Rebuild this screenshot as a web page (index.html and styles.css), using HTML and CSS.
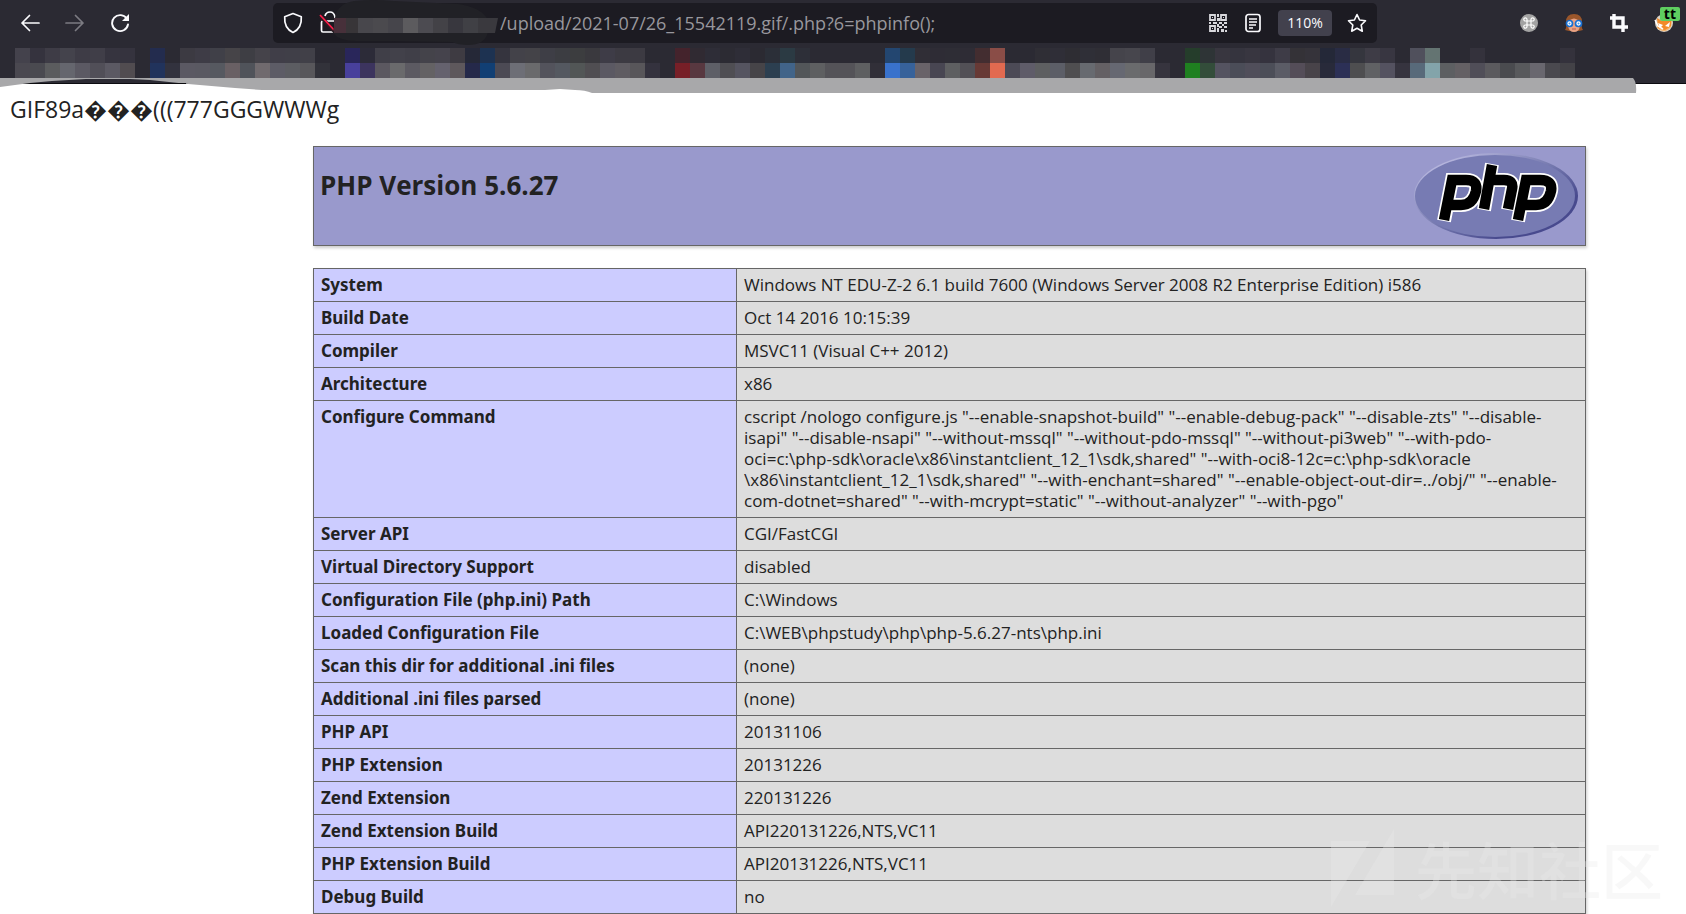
FILE: index.html
```html
<!DOCTYPE html>
<html lang="en">
<head>
<meta charset="utf-8">
<title>phpinfo()</title>
<link rel="stylesheet" href="styles.css">
</head>
<body>
<header class="chrome">
  <div class="toolbar">
    <nav class="nav">
      <button class="tool" aria-label="Back"><svg width="20" height="20" viewBox="0 0 20 20"><path d="M19 10H2M9.500 2.500L2 10l7.500 7.500" fill="none" stroke="#fbfbfe" stroke-width="1.700" stroke-linecap="round" stroke-linejoin="round"/></svg></button>
      <button class="tool" aria-label="Forward"><svg width="20" height="20" viewBox="0 0 20 20"><path d="M1 10h17M10.500 2.500L18 10l-7.500 7.500" fill="none" stroke="#7c7b82" stroke-width="1.700" stroke-linecap="round" stroke-linejoin="round"/></svg></button>
      <button class="tool" aria-label="Reload"><svg width="20" height="20" viewBox="0 0 20 20"><path d="M17 6A8 8 0 1 0 18 11.500" fill="none" stroke="#fbfbfe" stroke-width="1.900" stroke-linecap="round"/><path d="M19 1v7h-7z" fill="#fbfbfe"/></svg></button>
    </nav>
    <div class="urlbar">
      <svg class="shield" width="20" height="22" viewBox="0 0 20 22"><path d="M10 1.500L18.300 4.800C18.800 12 16.500 17.500 10 20.500C3.500 17.500 1.200 12 1.700 4.800Z" fill="none" stroke="#fbfbfe" stroke-width="1.700" stroke-linejoin="round"/></svg>
      <svg class="host" width="184" height="50" viewBox="0 0 184 50">
        <path d="M5 23h13v11H5q-1.500 0-1.500-1.500v-8Q3.500 23 5 23zM7 18q1-4 5-4t5 5v4" fill="none" stroke="#fbfbfe" stroke-width="1.700"/>
        <path d="M2 18l16 17" stroke="#2b1b22" stroke-width="4"/><path d="M2 17l16 17" stroke="#ff1f4b" stroke-width="1.700"/>
        <path d="M17 20C19 8 27 5 36 3Q55 1 76 3L140 6Q163 9 170 22V34Q167 47 150 47Q140 47 134 44L72 43H42Q22 44 15 35Z" fill="#212126"/>
        <g class="mosaic">
          <path d="M16 20h12v15H16z" fill="#47303a"/><path d="M28 20h12v15H28z" fill="#383538"/><path d="M40 20h15v15H40z" fill="#48474c"/><path d="M55 20h15v15H55z" fill="#4b4a4e"/><path d="M70 20h15v15H70z" fill="#46454b"/><path d="M85 20h15v15H85z" fill="#5c5b5e"/><path d="M100 20h15v15h-15z" fill="#4c4b51"/><path d="M115 20h15v15h-15z" fill="#434247"/><path d="M130 20h15v15h-15z" fill="#38373e"/><path d="M145 20h15v15h-15z" fill="#404045"/><path d="M160 20h20l-3 15h-17z" fill="#3a393e"/>
        </g>
      </svg>
      <input class="address" type="text" aria-label="Address" value="/upload/2021-07/26_15542119.gif/.php?6=phpinfo();">
      <div class="actions">
        <button class="action" aria-label="QR code"><svg width="18" height="18" viewBox="0 0 18 18"><path d="M1 1h5v5H1zM12 1h5v5h-5zM1 12h5v5H1z" fill="none" stroke="#d8d8dc" stroke-width="1.800"/><path d="M3 3h1v1H3zM14 3h1v1h-1zM3 14h1v1H3zM8 0h2v3H8zM8 4h3v3H8zM0 8h2v2H0zM4 8h4v2H4zM10 8h3v2h-3zM15 8h3v2h-3zM8 10h2v3H8zM13 10h2v2h-2zM10 12h3v2h-3zM15 12h3v2h-3zM8 14h2v4H8zM12 15h3v3h-3zM16 16h2v2h-2z" fill="#d8d8dc"/></svg></button>
        <button class="action" aria-label="Reader view"><svg width="18" height="20" viewBox="0 0 18 20"><rect x="2" y="1.500" width="14" height="17" rx="2.500" fill="none" stroke="#fbfbfe" stroke-width="1.700"/><path d="M5 6h8M5 9h8M5 12h7M5 15h4" stroke="#fbfbfe" stroke-width="1.500"/></svg></button>
        <button class="zoom">110%</button>
        <button class="action" aria-label="Bookmark this page"><svg width="20" height="20" viewBox="0 0 20 20"><path d="M10 1.500l2.600 5.500 5.900.8-4.300 4.200 1.100 6.200L10 15.300l-5.300 2.900 1.100-6.200L1.500 7.800 7.400 7z" fill="none" stroke="#fbfbfe" stroke-width="1.600" stroke-linejoin="round"/></svg></button>
      </div>
    </div>
    <div class="nav">
      <button class="tool" aria-label="Command extension"><svg width="20" height="20" viewBox="0 0 20 20"><circle cx="10" cy="10" r="9" fill="#a3a3a3"/><path d="M8 8h4v4H8zM8 8H6.500A1.600 1.600 0 1 1 8 6.500zM12 8V6.500A1.600 1.600 0 1 1 13.500 8zM12 12h1.500A1.600 1.600 0 1 1 12 13.500zM8 12v1.500A1.600 1.600 0 1 1 6.500 12z" fill="none" stroke="#fff" stroke-width="1.200"/></svg></button>
      <button class="tool" aria-label="Profile extension"><svg width="20" height="20" viewBox="0 0 20 20"><path d="M1 17Q3 14 2 9 2 1 10 1t8 8q-1 5 1 8l-4 1H5z" fill="#9a562b"/><path d="M5 7q5-3 10 0l1 6q-1 6-6 6t-6-6z" fill="#e9a283"/><path d="M4 7q4 0 6-3 2 3 6 3V3H4z" fill="#9a562b"/><circle cx="5.500" cy="10.500" r="3" fill="#fff" stroke="#176fd1" stroke-width="1.700"/><circle cx="14.500" cy="10.500" r="3" fill="#fff" stroke="#176fd1" stroke-width="1.700"/><circle cx="5.500" cy="10.500" r="1" fill="#4897e8"/><circle cx="14.500" cy="10.500" r="1" fill="#4897e8"/><path d="M8 16h4" stroke="#b85a4d"/></svg></button>
      <button class="tool" aria-label="Screenshot"><svg width="20" height="20" viewBox="0 0 20 20"><path d="M5 1v13h14M1 5h13v14" fill="none" stroke="#fbfbfe" stroke-width="3.400"/></svg></button>
      <button class="tool" aria-label="Proxy extension"><svg width="20" height="20" viewBox="0 0 20 20"><circle cx="10" cy="10" r="9" fill="#d9d2c7"/><path d="M3 15Q10 22 17 14L18 8 3 11z" fill="#f6b46e"/><path d="M3 5l5 3 6-1 3-3v9l-6 4-7-2z" fill="#f18a2a"/><path d="M4 10l5 2-3 3zM16 9l-5 4 4 1z" fill="#fff"/><path d="M1 7l3 6 5 3" fill="none" stroke="#fff" stroke-width="1.500"/></svg><span class="badge">tt</span></button>
    </div>
  </div>
  <svg class="bookmarks" id="bookmarks" height="45" width="100%" aria-hidden="true"></svg>
  <svg class="brush" height="16" width="1638" viewBox="0 0 1638 16" aria-hidden="true">
    <path d="M0 0H1633Q1637 4 1636 15H592Q585 12 575 12L560 11 545 12H262L235 10 188 6 150 2 130 1H86L52 3 30 5 0 9Z" fill="#a8a8aa"/>
    <path d="M30 5.500H186" stroke="#0c0c10"/>
  </svg>
</header>
<main class="page">
  <p class="raw">GIF89a<span class="unknown">���</span>(((777GGGWWWg</p>
  <div class="info">
    <div class="banner">
      <h1 class="title">PHP Version 5.6.27</h1>
      <svg class="logo" width="166" height="88" viewBox="0 0 166 88" role="img" aria-label="PHP logo">
        <defs><linearGradient id="rim" x1="0" y1="0" x2="1" y2="1"><stop offset="0.150" stop-color="#b4b4dc"/><stop offset="0.500" stop-color="#7377ad"/><stop offset="0.750" stop-color="#484a8e"/></linearGradient></defs>
        <ellipse cx="83" cy="44" rx="82" ry="43" fill="url(#rim)"/>
        <ellipse cx="82" cy="44" rx="80" ry="41" fill="#777bb3"/>
        <g fill="none">
          <path d="M31 69L39 28H53Q65 28 63 39Q60 53 48 53H37M71 58L79 12M76 28H91Q101 28 99 37L95 58M105 69L113 28H127Q140 28 138 39Q135 53 123 53H112" stroke="#fff" stroke-width="14"/>
          <path d="M31 68L39 28H53Q65 28 63 39Q60 53 48 53H37M71 57L79 13M76 28H91Q101 28 99 37L95 57M105 68L113 28H127Q140 28 138 39Q135 53 123 53H112" stroke="#000" stroke-width="10.500"/>
        </g>
      </svg>
    </div>
    <table class="facts">
      <tbody>
        <tr><th scope="row">System</th><td>Windows NT EDU-Z-2 6.1 build 7600 (Windows Server 2008 R2 Enterprise Edition) i586</td></tr>
        <tr><th scope="row">Build Date</th><td>Oct 14 2016 10:15:39</td></tr>
        <tr><th scope="row">Compiler</th><td>MSVC11 (Visual C++ 2012)</td></tr>
        <tr><th scope="row">Architecture</th><td>x86</td></tr>
        <tr><th scope="row">Configure Command</th><td>cscript /nologo configure.js "--enable-snapshot-build" "--enable-debug-pack" "--disable-zts" "--disable-<br>isapi" "--disable-nsapi" "--without-mssql" "--without-pdo-mssql" "--without-pi3web" "--with-pdo-<br>oci=c:\php-sdk\oracle\x86\instantclient_12_1\sdk,shared" "--with-oci8-12c=c:\php-sdk\oracle<br>\x86\instantclient_12_1\sdk,shared" "--with-enchant=shared" "--enable-object-out-dir=../obj/" "--enable-<br>com-dotnet=shared" "--with-mcrypt=static" "--without-analyzer" "--with-pgo"</td></tr>
        <tr><th scope="row">Server API</th><td>CGI/FastCGI</td></tr>
        <tr><th scope="row">Virtual Directory Support</th><td>disabled</td></tr>
        <tr><th scope="row">Configuration File (php.ini) Path</th><td>C:\Windows</td></tr>
        <tr><th scope="row">Loaded Configuration File</th><td>C:\WEB\phpstudy\php\php-5.6.27-nts\php.ini</td></tr>
        <tr><th scope="row">Scan this dir for additional .ini files</th><td>(none)</td></tr>
        <tr><th scope="row">Additional .ini files parsed</th><td>(none)</td></tr>
        <tr><th scope="row">PHP API</th><td>20131106</td></tr>
        <tr><th scope="row">PHP Extension</th><td>20131226</td></tr>
        <tr><th scope="row">Zend Extension</th><td>220131226</td></tr>
        <tr><th scope="row">Zend Extension Build</th><td>API220131226,NTS,VC11</td></tr>
        <tr><th scope="row">PHP Extension Build</th><td>API20131226,NTS,VC11</td></tr>
        <tr><th scope="row">Debug Build</th><td>no</td></tr>
        <tr><th scope="row"></th><td></td></tr>
      </tbody>
    </table>
  </div>
</main>
<div class="watermark" lang="zh">
  <svg width="64" height="80" viewBox="0 0 64 80" aria-hidden="true"><path d="M0 13H39L0 79ZM63 1V67H24Z" fill="#eaeaea"/></svg>
  <span>先知社区</span>
</div>
<script src="script.js"></script>
</body>
</html>
```
FILE: styles.css
```css
* { box-sizing: border-box; }
html { overflow: hidden; height: 100%; }
body {
  margin: 0;
  height: 100%;
  overflow: hidden;
  background: #fff;
  color: #222;
  font-family: "Open Sans", "Noto Sans", sans-serif;
}
button, input { font: inherit; color: inherit; border: 0; padding: 0; background: none; }
svg { display: block; flex: none; }

.chrome { position: relative; background: #2b2a33; border-bottom: 1px solid #0c0c10; height: 84px; }
.toolbar { display: flex; align-items: center; height: 46px; padding-left: 7px; }
.nav { display: flex; flex: none; }
.tool { position: relative; display: flex; align-items: center; justify-content: center; width: 45px; height: 40px; }
.badge {
  position: absolute; top: 4px; right: 6px;
  padding: 0 4px; border-radius: 2px;
  background: #5fce60; color: #000;
  font: bold 14px/14px "Open Sans", sans-serif;
}
.urlbar {
  flex: 1; min-width: 0; height: 40px; margin: 0 129px 0 131px;
  display: flex; align-items: center;
  border-radius: 5px; background: #1c1b22;
}
.shield { margin-left: 10px; }
.host { margin: -5px 0 -5px 15px; }
.address { flex: 1; min-width: 0; margin-left: -2px; height: 32px; color: #98979d; font-size: 18px; outline: none; }
.actions { display: flex; align-items: center; flex: none; padding-right: 10px; }
.action { display: flex; justify-content: center; width: 35px; }
.action:last-child { width: 20px; }
.zoom { width: 54px; height: 26px; margin: 0 15px 0 8px; border-radius: 4px; background: #42414d; color: #fbfbfe; font-size: 14px; line-height: 26px; }
.bookmarks { position: absolute; left: 0; top: 48px; }
.brush { position: absolute; left: 0; top: 78px; }

.page { padding: 7px 10px; }
.raw { margin: 0; font-size: 23px; line-height: 36px; }
.unknown { font-family: "Noto Sans", sans-serif; }
.info { margin: 19px 90px 0 303px; }
.banner {
  display: flex; align-items: flex-start; justify-content: space-between;
  height: 100px; padding: 5px 6px;
  border: 1px solid #666; background: #9999cc;
  box-shadow: 1px 2px 3px #ccc;
}
.title { margin: 15px 0 0; font-size: 26px; line-height: 36px; font-weight: bold; }
.facts {
  width: 100%; margin-top: 22px;
  border-collapse: collapse; table-layout: fixed;
  box-shadow: 1px 2px 3px #ccc;
  font-size: 17px; line-height: 21px;
}
.facts th, .facts td { height: 33px; padding: 5px 7px 6px; border: 1px solid #666; text-align: left; vertical-align: top; }
.facts th { width: 423px; background: #ccccff; font-family: "Noto Sans", sans-serif; font-weight: bold; }
.facts td { background: #ddd; white-space: nowrap; }

.watermark {
  position: fixed; right: 23px; bottom: 6px;
  display: flex; align-items: center; gap: 20px;
  opacity: 0.32; color: #eaeaea;
  font: 500 62px/80px "Noto Sans CJK SC", sans-serif;
}
```
FILE: script.js
```js
// Bookmark strip: two rows of 15px tiles, one hex colour per tile, "-" for an empty tile.
const upper = "44424c 35333e 3e3c46 44434c 3e3c46 403e48 36343f 35333e - 232c4e - 3c3a42 3e3c46 404048 464448 3e3e44 45434a 403e48 403f48 414048 - - 29265a 2c2b38 403f48 42414a 403f48 44434a 45434c 3e3b42 252837 1d3251 35343e 434249 444348 3e3e46 3c3d42 3c3d3f 3a393e 3e3c47 3c3a42 3c3a42 - - 44232c 302a32 2e2d37 2c2b33 2e2d37 2b2a32 2b2f38 2b3a43 2d2f38 - - - - - 234670 243a4c 302e36 2e2c35 2e2d35 2e2c35 432d30 8a4d47 - - 2f2e35 2f2e37 2e2d33 2f2f37 2f2e35 45444b 47464d 403f48 - - 253d2b 2e3436 38363f 35343e 383640 35333e 3e3c47 343237 35333a 242838 292c44 35363e 3e3c46 383641 - 50505c 647472 - - 34323c - - - - - 34323c".split(" ");
const lower = "4a4850 4a4a50 5b5c5e 65666e 5b5963 514f58 5b5963 514c50 - 21335c 32323e 5b5963 5a5962 565960 696064 50535a 706a6e 5d5c66 5c5d62 58575b 32323a - 48409c 3c345e 5b5860 6a6a6c 5c5a62 646264 65626e 5e585c 25294a 113f74 4c4a54 6d6e76 6a6a6c 53535c 545860 525656 504e52 5b5963 5f5c62 58565a 34323e - 771f27 583840 5e5f67 4f4e53 555460 464448 2c3f50 416489 525659 5e5f61 545358 545358 5e5f61 312f38 3972cc 37629a 696369 484652 5e5f61 525056 673935 e26a50 4c4a56 5f5c69 5e5f61 5c5e67 4f4e50 676a70 646064 666872 6a6b6d 68676a 36343e - 1f8020 334d3a 545360 4b4d58 504e5a 4c4e58 5b5c66 544d58 484349 282a3a 2c3056 4e4e50 606164 545260 36343f 586a7a 83a4aa 5d5f62 646064 504e58 5b5a5e 4a4b4f 58595c 69676f 4a494f 434247".split(" ");
const tile = 15;
const strip = document.getElementById("bookmarks");
[upper, lower].forEach((row, y) => row.forEach((colour, x) => {
  if (colour === "-") return;
  const r = document.createElementNS("http://www.w3.org/2000/svg", "rect");
  r.setAttribute("x", (x + 1) * tile);
  r.setAttribute("y", y * tile);
  r.setAttribute("width", tile);
  r.setAttribute("height", tile);
  r.setAttribute("fill", "#" + colour);
  strip.append(r);
}));
```
